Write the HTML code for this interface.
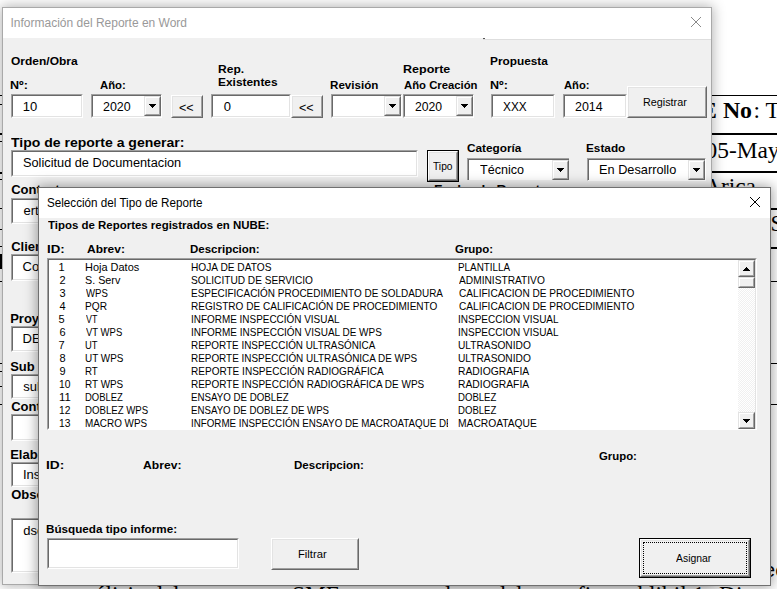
<!DOCTYPE html>
<html><head><meta charset="utf-8"><title>Informaci&oacute;n del Reporte en Word</title>
<style>
html,body{margin:0;padding:0;}
body{width:777px;height:589px;overflow:hidden;position:relative;background:#fff;font-family:"Liberation Sans",sans-serif;color:#000;}
.t{position:absolute;white-space:pre;transform-origin:0 0;}
.abs,.win,.tb,.btn,.cb,.ln{position:absolute;box-sizing:border-box;}
.win{background:#f0f0f0;border:1px solid #a9a9a9;overflow:hidden;}
.ttl{position:absolute;left:0;top:0;right:0;background:#fff;}
.tb{background:#fff;border:1px solid;border-color:#a0a0a0 #fff #fff #a0a0a0;overflow:hidden;}
.tb:before{content:"";position:absolute;left:0;top:0;right:0;bottom:0;border:1px solid;border-color:#696969 #e3e3e3 #e3e3e3 #696969;}
.btn{background:#f0f0f0;border:1px solid;border-color:#fff #696969 #696969 #fff;}
.btn:before{content:"";position:absolute;left:0;top:0;right:0;bottom:0;border:1px solid;border-color:#e3e3e3 #a0a0a0 #a0a0a0 #e3e3e3;}
.b2{border-color:#e3e3e3 #696969 #696969 #e3e3e3;}
.b2:before{border-color:#fff #a0a0a0 #a0a0a0 #fff;}
.ln{background:#000;}
</style></head><body>
<div id="bg" class="abs" style="left:0;top:0;width:777px;height:589px;overflow:hidden;">
<div class="ln" style="left:712px;top:95px;width:65px;height:1px;"></div>
<div class="ln" style="left:712px;top:133px;width:65px;height:2px;"></div>
<div class="ln" style="left:712px;top:171px;width:65px;height:2px;"></div>
<div class="ln" style="left:771px;top:208px;width:6px;height:2px;"></div>
<div class="ln" style="left:771px;top:247px;width:6px;height:2px;"></div>
<div class="ln" style="left:771px;top:281px;width:6px;height:1px;"></div>
<div class="ln" style="left:771px;top:363px;width:6px;height:1px;"></div>
<div class="ln" style="left:771px;top:404px;width:6px;height:1px;"></div>
<div class="ln" style="left:0px;top:95px;width:2px;height:1px;"></div>
<div class="ln" style="left:0px;top:104px;width:2px;height:1px;"></div>
<div class="ln" style="left:0px;top:133px;width:2px;height:2px;"></div>
<div class="ln" style="left:0px;top:141px;width:2px;height:1px;"></div>
<div class="ln" style="left:0px;top:172px;width:2px;height:2px;"></div>
<div class="ln" style="left:0px;top:179px;width:2px;height:1px;"></div>
<div class="ln" style="left:0px;top:208px;width:2px;height:1px;"></div>
<div class="ln" style="left:0px;top:229px;width:2px;height:1px;"></div>
<div class="ln" style="left:0px;top:246px;width:2px;height:1px;"></div>
<div class="ln" style="left:0px;top:254px;width:2px;height:15px;"></div>
<div class="ln" style="left:0px;top:281px;width:2px;height:1px;"></div>
<div class="ln" style="left:0px;top:363px;width:2px;height:1px;"></div>
<div class="ln" style="left:0px;top:371px;width:2px;height:1px;"></div>
<div class="ln" style="left:0px;top:386px;width:2px;height:1px;"></div>
<div class="ln" style="left:0px;top:404px;width:2px;height:1px;"></div>
<span class="t" style="left:700.50px;top:96.00px;font-size:23.4px;line-height:28px;font-weight:bold;font-family:'Liberation Serif', serif;transform:scaleX(1.0204);">E No</span>
<span class="t" style="left:753.50px;top:96.00px;font-size:23.4px;line-height:28px;font-family:'Liberation Serif', serif;">: T</span>
<span class="t" style="left:705.50px;top:136.00px;font-size:23.4px;line-height:28px;font-family:'Liberation Serif', serif;">05-May</span>
<span class="t" style="left:704.00px;top:172.00px;font-size:23.4px;line-height:28px;font-family:'Liberation Serif', serif;">Arica</span>
<span class="t" style="left:770.50px;top:209.00px;font-size:23.4px;line-height:28px;font-family:'Liberation Serif', serif;">S</span>
<span class="t" style="left:763.50px;top:557.00px;font-size:21px;line-height:25px;">ec</span>
<span class="t" style="left:95.00px;top:580.00px;font-size:23.4px;line-height:28px;font-family:'Liberation Serif', serif;">álisis</span>
<span class="t" style="left:151.00px;top:580.00px;font-size:23.4px;line-height:28px;font-family:'Liberation Serif', serif;">del</span>
<span class="t" style="left:292.00px;top:580.00px;font-size:23.4px;line-height:28px;font-family:'Liberation Serif', serif;">SMF</span>
<span class="t" style="left:445.00px;top:580.00px;font-size:23.4px;line-height:28px;font-family:'Liberation Serif', serif;">la</span>
<span class="t" style="left:494.00px;top:580.00px;font-size:23.4px;line-height:28px;font-family:'Liberation Serif', serif;">del</span>
<span class="t" style="left:577.00px;top:580.00px;font-size:23.4px;line-height:28px;font-family:'Liberation Serif', serif;">fin</span>
<span class="t" style="left:627.00px;top:580.00px;font-size:23.4px;line-height:28px;font-family:'Liberation Serif', serif;">ahlibil</span>
<span class="t" style="left:693.00px;top:580.00px;font-size:23.4px;line-height:28px;font-family:'Liberation Serif', serif;">1</span>
<span class="t" style="left:719.00px;top:580.00px;font-size:23.4px;line-height:28px;font-family:'Liberation Serif', serif;">Dir</span>
</div>
<div id="w1" class="win" style="left:2px;top:7px;width:710px;height:578px;box-shadow:0 0 12px 1px rgba(0,0,0,.30);">
<div class="ttl" style="height:30px;"></div><div class="abs" style="left:480px;top:30px;right:0;height:2px;background:#fff;border-bottom:1px solid #dedede;"></div><div class="abs" style="left:480px;top:30px;width:2px;height:1px;background:#555;"></div>
<svg class="abs" style="left:688px;top:9px" width="10" height="10" viewBox="0 0 10 10"><path d="M0 0L10 10M10 0L0 10" stroke="#8a8a8a" stroke-width="1" fill="none"/></svg>
<div class="tb" style="left:8px;top:86px;width:72px;height:24px;"></div>
<div class="abs" style="left:88px;top:86px;width:71px;height:24px;background:#fff;border-style:solid;border-color:#a0a0a0 #fff #fff #a0a0a0;border-width:1px 1px 1px 1px;"><div class="abs" style="left:0;top:0;right:0;bottom:0;border-style:solid;border-color:#696969 #e3e3e3 #e3e3e3 #696969;border-width:1px 0 1px 1px;"></div><div class="btn b2" style="right:0;top:1px;width:17px;height:20px;"><svg class="abs" style="left:4px;top:7px" width="7" height="4" viewBox="0 0 7 4" shape-rendering="crispEdges"><path d="M0 0h7v1h-7zM1 1h5v1h-5zM2 2h3v1h-3zM3 3h1v1h-1z" fill="#000"/></svg></div></div>
<div class="btn" style="left:168px;top:87px;width:32px;height:23px;"></div>
<div class="tb" style="left:208px;top:86px;width:80px;height:24px;"></div>
<div class="btn" style="left:288px;top:87px;width:32px;height:23px;"></div>
<div class="abs" style="left:328px;top:86px;width:71px;height:24px;background:#fff;border-style:solid;border-color:#a0a0a0 #fff #fff #a0a0a0;border-width:1px 1px 1px 1px;"><div class="abs" style="left:0;top:0;right:0;bottom:0;border-style:solid;border-color:#696969 #e3e3e3 #e3e3e3 #696969;border-width:1px 0 1px 1px;"></div><div class="btn b2" style="right:0;top:1px;width:17px;height:20px;"><svg class="abs" style="left:4px;top:7px" width="7" height="4" viewBox="0 0 7 4" shape-rendering="crispEdges"><path d="M0 0h7v1h-7zM1 1h5v1h-5zM2 2h3v1h-3zM3 3h1v1h-1z" fill="#000"/></svg></div></div>
<div class="abs" style="left:400px;top:86px;width:71px;height:24px;background:#fff;border-style:solid;border-color:#a0a0a0 #fff #fff #a0a0a0;border-width:1px 1px 1px 1px;"><div class="abs" style="left:0;top:0;right:0;bottom:0;border-style:solid;border-color:#696969 #e3e3e3 #e3e3e3 #696969;border-width:1px 0 1px 1px;"></div><div class="btn b2" style="right:0;top:1px;width:17px;height:20px;"><svg class="abs" style="left:4px;top:7px" width="7" height="4" viewBox="0 0 7 4" shape-rendering="crispEdges"><path d="M0 0h7v1h-7zM1 1h5v1h-5zM2 2h3v1h-3zM3 3h1v1h-1z" fill="#000"/></svg></div></div>
<div class="tb" style="left:488px;top:86px;width:64px;height:24px;"></div>
<div class="tb" style="left:560px;top:86px;width:64px;height:24px;"></div>
<div class="btn" style="left:624px;top:78px;width:80px;height:32px;"></div>
<div class="tb" style="left:8px;top:142px;width:407px;height:27px;"></div>
<div class="btn" style="left:425px;top:143px;width:30px;height:30px;outline:1px solid #000;outline-offset:0px;"></div>
<div class="abs" style="left:464px;top:150px;width:102px;height:22px;background:#fff;border-style:solid;border-color:#a0a0a0 #fff #fff #a0a0a0;border-width:1px 0px 0px 1px;"><div class="abs" style="left:0;top:0;right:0;bottom:0;border-style:solid;border-color:#696969 #e3e3e3 #e3e3e3 #696969;border-width:1px 0 0px 1px;"></div><div class="btn b2" style="right:0;top:1px;width:17px;height:20px;"><svg class="abs" style="left:4px;top:7px" width="7" height="4" viewBox="0 0 7 4" shape-rendering="crispEdges"><path d="M0 0h7v1h-7zM1 1h5v1h-5zM2 2h3v1h-3zM3 3h1v1h-1z" fill="#000"/></svg></div></div>
<div class="abs" style="left:584px;top:150px;width:119px;height:23px;background:#fff;border-style:solid;border-color:#a0a0a0 #fff #fff #a0a0a0;border-width:1px 1px 1px 1px;"><div class="abs" style="left:0;top:0;right:0;bottom:0;border-style:solid;border-color:#696969 #e3e3e3 #e3e3e3 #696969;border-width:1px 0 0px 1px;"></div><div class="btn b2" style="right:0;top:1px;width:17px;height:20px;"><svg class="abs" style="left:4px;top:7px" width="7" height="4" viewBox="0 0 7 4" shape-rendering="crispEdges"><path d="M0 0h7v1h-7zM1 1h5v1h-5zM2 2h3v1h-3zM3 3h1v1h-1z" fill="#000"/></svg></div></div>
<div class="tb" style="left:8px;top:190px;width:300px;height:26px;"></div>
<div class="tb" style="left:8px;top:246px;width:300px;height:27px;"></div>
<div class="tb" style="left:8px;top:318px;width:300px;height:26px;"></div>
<div class="tb" style="left:8px;top:366px;width:300px;height:25px;"></div>
<div class="tb" style="left:8px;top:406px;width:300px;height:27px;"></div>
<div class="tb" style="left:8px;top:454px;width:300px;height:25px;"></div>
<div class="tb" style="left:8px;top:510px;width:300px;height:55px;"></div>
<span class="t" style="left:7.50px;top:7.00px;font-size:12px;line-height:16px;color:#999;">Información del Reporte en Word</span>
<span class="t" style="left:8.00px;top:46.00px;font-size:11px;line-height:14px;font-weight:bold;transform:scaleX(1.0902);">Orden/Obra</span>
<span class="t" style="left:6.86px;top:70.00px;font-size:11px;line-height:14px;font-weight:bold;transform:scaleX(1.1429);">Nº:</span>
<span class="t" style="left:96.50px;top:70.00px;font-size:11px;line-height:14px;font-weight:bold;transform:scaleX(1.0292);">Año:</span>
<span class="t" style="left:19.70px;top:90.00px;font-size:13px;line-height:17px;">10</span>
<span class="t" style="left:99.74px;top:90.00px;font-size:13px;line-height:17px;transform:scaleX(0.9571);">2020</span>
<span class="t" style="left:175.70px;top:91.00px;font-size:13px;line-height:17px;transform:scaleX(0.9667);">&lt;&lt;</span>
<span class="t" style="left:215.40px;top:54.00px;font-size:11px;line-height:14px;font-weight:bold;transform:scaleX(1.0955);">Rep.</span>
<span class="t" style="left:215.42px;top:67.00px;font-size:11px;line-height:14px;font-weight:bold;transform:scaleX(1.0833);">Existentes</span>
<span class="t" style="left:220.70px;top:90.00px;font-size:13px;line-height:17px;">0</span>
<span class="t" style="left:295.70px;top:91.00px;font-size:13px;line-height:17px;transform:scaleX(0.9667);">&lt;&lt;</span>
<span class="t" style="left:327.14px;top:70.00px;font-size:11px;line-height:14px;font-weight:bold;transform:scaleX(1.0556);">Revisión</span>
<span class="t" style="left:399.56px;top:54.00px;font-size:11px;line-height:14px;font-weight:bold;transform:scaleX(1.1375);">Reporte</span>
<span class="t" style="left:400.70px;top:70.00px;font-size:11px;line-height:14px;font-weight:bold;transform:scaleX(1.0282);">Año Creación</span>
<span class="t" style="left:412.26px;top:90.00px;font-size:13px;line-height:17px;transform:scaleX(0.9393);">2020</span>
<span class="t" style="left:487.12px;top:46.00px;font-size:11px;line-height:14px;font-weight:bold;transform:scaleX(1.0755);">Propuesta</span>
<span class="t" style="left:487.06px;top:70.00px;font-size:11px;line-height:14px;font-weight:bold;transform:scaleX(1.1429);">Nº:</span>
<span class="t" style="left:560.70px;top:70.00px;font-size:11px;line-height:14px;font-weight:bold;transform:scaleX(1.0208);">Año:</span>
<span class="t" style="left:500.00px;top:90.00px;font-size:13px;line-height:17px;transform:scaleX(0.9115);">XXX</span>
<span class="t" style="left:571.74px;top:90.00px;font-size:13px;line-height:17px;transform:scaleX(0.9571);">2014</span>
<span class="t" style="left:639.52px;top:87.00px;font-size:11px;line-height:14px;transform:scaleX(0.9818);">Registrar</span>
<span class="t" style="left:8.20px;top:126.00px;font-size:13px;line-height:17px;font-weight:bold;transform:scaleX(1.0781);">Tipo de reporte a generar:</span>
<span class="t" style="left:19.64px;top:147.00px;font-size:12px;line-height:16px;transform:scaleX(1.0633);">Solicitud de Documentacion</span>
<span class="t" style="left:430.00px;top:151.00px;font-size:11px;line-height:14px;transform:scaleX(0.9286);">Tipo</span>
<span class="t" style="left:464.00px;top:133.00px;font-size:11px;line-height:14px;font-weight:bold;transform:scaleX(1.0725);">Categoría</span>
<span class="t" style="left:476.50px;top:153.00px;font-size:13px;line-height:17px;transform:scaleX(0.9667);">Técnico</span>
<span class="t" style="left:583.43px;top:133.00px;font-size:11px;line-height:14px;font-weight:bold;transform:scaleX(1.0714);">Estado</span>
<span class="t" style="left:595.52px;top:153.00px;font-size:13px;line-height:17px;transform:scaleX(0.9805);">En Desarrollo</span>
<span class="t" style="left:8.20px;top:173.00px;font-size:13px;line-height:17px;font-weight:bold;">Contacto:</span>
<span class="t" style="left:431.46px;top:173.00px;font-size:13px;line-height:17px;font-weight:bold;transform:scaleX(1.0417);">Fecha de Reporte</span>
<span class="t" style="left:20.50px;top:194.00px;font-size:13px;line-height:17px;">ert</span>
<span class="t" style="left:8.20px;top:230.00px;font-size:13px;line-height:17px;font-weight:bold;">Cliente</span>
<span class="t" style="left:19.50px;top:250.00px;font-size:13px;line-height:17px;">Co</span>
<span class="t" style="left:7.20px;top:302.00px;font-size:13px;line-height:17px;font-weight:bold;">Proyecto</span>
<span class="t" style="left:19.50px;top:322.00px;font-size:13px;line-height:17px;">DE</span>
<span class="t" style="left:7.20px;top:350.00px;font-size:13px;line-height:17px;font-weight:bold;">Sub</span>
<span class="t" style="left:20.30px;top:370.00px;font-size:13px;line-height:17px;">sub</span>
<span class="t" style="left:8.20px;top:390.00px;font-size:13px;line-height:17px;font-weight:bold;">Contrato</span>
<span class="t" style="left:7.20px;top:438.00px;font-size:13px;line-height:17px;font-weight:bold;">Elaborado</span>
<span class="t" style="left:20.00px;top:458.00px;font-size:13px;line-height:17px;">Ins</span>
<span class="t" style="left:8.20px;top:478.00px;font-size:13px;line-height:17px;font-weight:bold;">Observaciones</span>
<span class="t" style="left:20.30px;top:514.00px;font-size:13px;line-height:17px;">dso</span>
</div>
<div id="w2" class="win" style="left:38px;top:187px;width:733px;height:399px;border-color:#707070;box-shadow:0 0 12px 1px rgba(0,0,0,.38);">
<div class="ttl" style="height:30px;"></div>
<svg class="abs" style="left:711px;top:9px" width="10" height="10" viewBox="0 0 10 10"><path d="M0 0L10 10M10 0L0 10" stroke="#000" stroke-width="1" fill="none"/></svg>
<div class="tb" style="left:8px;top:350px;width:192px;height:31px;"></div>
<div class="btn" style="left:232px;top:350px;width:88px;height:32px;"></div>
<div class="btn" style="left:601px;top:351px;width:110px;height:38px;outline:1px solid #000;outline-offset:0px;"><div class="abs" style="left:2px;top:2px;right:2px;bottom:2px;border:1px dotted #000;"></div></div>
<span class="t" style="left:7.53px;top:7.00px;font-size:12px;line-height:16px;transform:scaleX(0.9717);">Selección del Tipo de Reporte</span>
<span class="t" style="left:8.50px;top:30.00px;font-size:11px;line-height:14px;font-weight:bold;transform:scaleX(1.0410);">Tipos de Reportes registrados en NUBE:</span>
<span class="t" style="left:7.59px;top:54.00px;font-size:11px;line-height:14px;font-weight:bold;transform:scaleX(1.2077);">ID:</span>
<span class="t" style="left:47.80px;top:54.00px;font-size:11px;line-height:14px;font-weight:bold;transform:scaleX(1.0882);">Abrev:</span>
<span class="t" style="left:151.15px;top:54.00px;font-size:11px;line-height:14px;font-weight:bold;transform:scaleX(1.0462);">Descripcion:</span>
<span class="t" style="left:416.00px;top:54.00px;font-size:11px;line-height:14px;font-weight:bold;transform:scaleX(1.0417);">Grupo:</span>
<span class="t" style="left:6.75px;top:270.00px;font-size:11px;line-height:14px;font-weight:bold;transform:scaleX(1.2462);">ID:</span>
<span class="t" style="left:104.00px;top:270.00px;font-size:11px;line-height:14px;font-weight:bold;transform:scaleX(1.1029);">Abrev:</span>
<span class="t" style="left:254.95px;top:270.00px;font-size:11px;line-height:14px;font-weight:bold;transform:scaleX(1.0492);">Descripcion:</span>
<span class="t" style="left:560.10px;top:261.00px;font-size:11px;line-height:14px;font-weight:bold;transform:scaleX(1.0333);">Grupo:</span>
<span class="t" style="left:7.44px;top:334.00px;font-size:11px;line-height:14px;font-weight:bold;transform:scaleX(1.0615);">Búsqueda tipo informe:</span>
<span class="t" style="left:259.18px;top:359.00px;font-size:11px;line-height:14px;transform:scaleX(1.0222);">Filtrar</span>
<span class="t" style="left:637.00px;top:363.00px;font-size:11px;line-height:14px;transform:scaleX(0.9459);">Asignar</span>
<div id="list" class="tb" style="left:8px;top:70px;width:710px;height:172px;">
<div class="abs" style="left:1px;top:1px;right:1px;bottom:0;overflow:hidden;"><div class="abs" style="left:0;right:0;bottom:0;height:1px;background:#fff;"></div>
<div class="abs" style="left:689px;top:0px;width:17px;height:169px;background:#fff conic-gradient(#f0f0f0 25%,#fff 0 50%,#f0f0f0 0 75%,#fff 0) 0 0/2px 2px;"></div>
<div class="btn b2" style="left:689px;top:0px;width:17px;height:17px;"><svg class="abs" style="left:4px;top:6px" width="7" height="4" viewBox="0 0 7 4" shape-rendering="crispEdges"><path d="M0 3h7v1h-7zM1 2h5v1h-5zM2 1h3v1h-3zM3 0h1v1h-1z" fill="#000"/></svg></div>
<div class="btn b2" style="left:689px;top:17px;width:17px;height:11px;"></div>
<div class="btn b2" style="left:689px;top:152px;width:17px;height:17px;"><svg class="abs" style="left:4px;top:6px" width="7" height="4" viewBox="0 0 7 4" shape-rendering="crispEdges"><path d="M0 0h7v1h-7zM1 1h5v1h-5zM2 2h3v1h-3zM3 3h1v1h-1z" fill="#000"/></svg></div>
<span class="t" style="left:9.50px;top:0.00px;font-size:11px;line-height:14px;">1</span>
<span class="t" style="left:35.50px;top:0.00px;font-size:11px;line-height:14px;transform:scaleX(0.9962);">Hoja Datos</span>
<span class="t" style="left:408.80px;top:0.00px;font-size:11px;line-height:14px;transform:scaleX(0.8982);">PLANTILLA</span>
<span class="t" style="left:10.50px;top:13.00px;font-size:11px;line-height:14px;">2</span>
<span class="t" style="left:35.52px;top:13.00px;font-size:11px;line-height:14px;transform:scaleX(0.9800);">S. Serv</span>
<span class="t" style="left:409.70px;top:13.00px;font-size:11px;line-height:14px;transform:scaleX(0.9258);">ADMINISTRATIVO</span>
<span class="t" style="left:10.50px;top:26.00px;font-size:11px;line-height:14px;">3</span>
<span class="t" style="left:36.50px;top:26.00px;font-size:11px;line-height:14px;transform:scaleX(0.8720);">WPS</span>
<span class="t" style="left:409.70px;top:26.00px;font-size:11px;line-height:14px;transform:scaleX(0.9178);">CALIFICACION DE PROCEDIMIENTO</span>
<span class="t" style="left:10.50px;top:39.00px;font-size:11px;line-height:14px;">4</span>
<span class="t" style="left:35.58px;top:39.00px;font-size:11px;line-height:14px;transform:scaleX(0.9227);">PQR</span>
<span class="t" style="left:409.70px;top:39.00px;font-size:11px;line-height:14px;transform:scaleX(0.9178);">CALIFICACION DE PROCEDIMIENTO</span>
<span class="t" style="left:9.50px;top:52.00px;font-size:11px;line-height:14px;">5</span>
<span class="t" style="left:36.50px;top:52.00px;font-size:11px;line-height:14px;transform:scaleX(0.8071);">VT</span>
<span class="t" style="left:408.79px;top:52.00px;font-size:11px;line-height:14px;transform:scaleX(0.9092);">INSPECCION VISUAL</span>
<span class="t" style="left:10.50px;top:65.00px;font-size:11px;line-height:14px;">6</span>
<span class="t" style="left:36.50px;top:65.00px;font-size:11px;line-height:14px;transform:scaleX(0.8643);">VT WPS</span>
<span class="t" style="left:408.79px;top:65.00px;font-size:11px;line-height:14px;transform:scaleX(0.9092);">INSPECCION VISUAL</span>
<span class="t" style="left:9.50px;top:78.00px;font-size:11px;line-height:14px;">7</span>
<span class="t" style="left:35.64px;top:78.00px;font-size:11px;line-height:14px;transform:scaleX(0.8571);">UT</span>
<span class="t" style="left:408.77px;top:78.00px;font-size:11px;line-height:14px;transform:scaleX(0.9260);">ULTRASONIDO</span>
<span class="t" style="left:10.50px;top:91.00px;font-size:11px;line-height:14px;">8</span>
<span class="t" style="left:35.60px;top:91.00px;font-size:11px;line-height:14px;transform:scaleX(0.9024);">UT WPS</span>
<span class="t" style="left:408.77px;top:91.00px;font-size:11px;line-height:14px;transform:scaleX(0.9260);">ULTRASONIDO</span>
<span class="t" style="left:10.50px;top:104.00px;font-size:11px;line-height:14px;">9</span>
<span class="t" style="left:35.62px;top:104.00px;font-size:11px;line-height:14px;transform:scaleX(0.8846);">RT</span>
<span class="t" style="left:408.76px;top:104.00px;font-size:11px;line-height:14px;transform:scaleX(0.9387);">RADIOGRAFIA</span>
<span class="t" style="left:10.06px;top:117.00px;font-size:11px;line-height:14px;transform:scaleX(0.9364);">10</span>
<span class="t" style="left:35.60px;top:117.00px;font-size:11px;line-height:14px;transform:scaleX(0.9024);">RT WPS</span>
<span class="t" style="left:408.76px;top:117.00px;font-size:11px;line-height:14px;transform:scaleX(0.9387);">RADIOGRAFIA</span>
<span class="t" style="left:9.97px;top:130.00px;font-size:11px;line-height:14px;transform:scaleX(1.0300);">11</span>
<span class="t" style="left:35.64px;top:130.00px;font-size:11px;line-height:14px;transform:scaleX(0.8605);">DOBLEZ</span>
<span class="t" style="left:408.83px;top:130.00px;font-size:11px;line-height:14px;transform:scaleX(0.8721);">DOBLEZ</span>
<span class="t" style="left:10.06px;top:143.00px;font-size:11px;line-height:14px;transform:scaleX(0.9364);">12</span>
<span class="t" style="left:35.62px;top:143.00px;font-size:11px;line-height:14px;transform:scaleX(0.8761);">DOBLEZ WPS</span>
<span class="t" style="left:408.83px;top:143.00px;font-size:11px;line-height:14px;transform:scaleX(0.8721);">DOBLEZ</span>
<span class="t" style="left:10.06px;top:156.00px;font-size:11px;line-height:14px;transform:scaleX(0.9364);">13</span>
<span class="t" style="left:35.60px;top:156.00px;font-size:11px;line-height:14px;transform:scaleX(0.9000);">MACRO WPS</span>
<span class="t" style="left:408.77px;top:156.00px;font-size:11px;line-height:14px;transform:scaleX(0.9325);">MACROATAQUE</span>
<div class="abs" style="left:142px;top:0;width:257px;height:169px;overflow:hidden;">
<span class="t" style="left:-0.42px;top:0.00px;font-size:11px;line-height:14px;transform:scaleX(0.9244);">HOJA DE DATOS</span>
<span class="t" style="left:-0.42px;top:13.00px;font-size:11px;line-height:14px;transform:scaleX(0.9206);">SOLICITUD DE SERVICIO</span>
<span class="t" style="left:-0.40px;top:26.00px;font-size:11px;line-height:14px;transform:scaleX(0.9047);">ESPECIFICACIÓN PROCEDIMIENTO DE SOLDADURA</span>
<span class="t" style="left:-0.41px;top:39.00px;font-size:11px;line-height:14px;transform:scaleX(0.9126);">REGISTRO DE CALIFICACIÓN DE PROCEDIMIENTO</span>
<span class="t" style="left:-0.40px;top:52.00px;font-size:11px;line-height:14px;transform:scaleX(0.9037);">INFORME INSPECCIÓN VISUAL</span>
<span class="t" style="left:-0.41px;top:65.00px;font-size:11px;line-height:14px;transform:scaleX(0.9067);">INFORME INSPECCIÓN VISUAL DE WPS</span>
<span class="t" style="left:-0.40px;top:78.00px;font-size:11px;line-height:14px;transform:scaleX(0.8995);">REPORTE INSPECCIÓN ULTRASÓNICA</span>
<span class="t" style="left:-0.40px;top:91.00px;font-size:11px;line-height:14px;transform:scaleX(0.9020);">REPORTE INSPECCIÓN ULTRASÓNICA DE WPS</span>
<span class="t" style="left:-0.41px;top:104.00px;font-size:11px;line-height:14px;transform:scaleX(0.9119);">REPORTE INSPECCIÓN RADIOGRÁFICA</span>
<span class="t" style="left:-0.41px;top:117.00px;font-size:11px;line-height:14px;transform:scaleX(0.9070);">REPORTE INSPECCIÓN RADIOGRÁFICA DE WPS</span>
<span class="t" style="left:-0.38px;top:130.00px;font-size:11px;line-height:14px;transform:scaleX(0.8844);">ENSAYO DE DOBLEZ</span>
<span class="t" style="left:-0.38px;top:143.00px;font-size:11px;line-height:14px;transform:scaleX(0.8801);">ENSAYO DE DOBLEZ DE WPS</span>
<span class="t" style="left:-0.39px;top:156.00px;font-size:11px;line-height:14px;transform:scaleX(0.8879);">INFORME INSPECCIÓN ENSAYO DE MACROATAQUE DE WPS</span>
</div>
</div></div>
</div>
</body></html>
